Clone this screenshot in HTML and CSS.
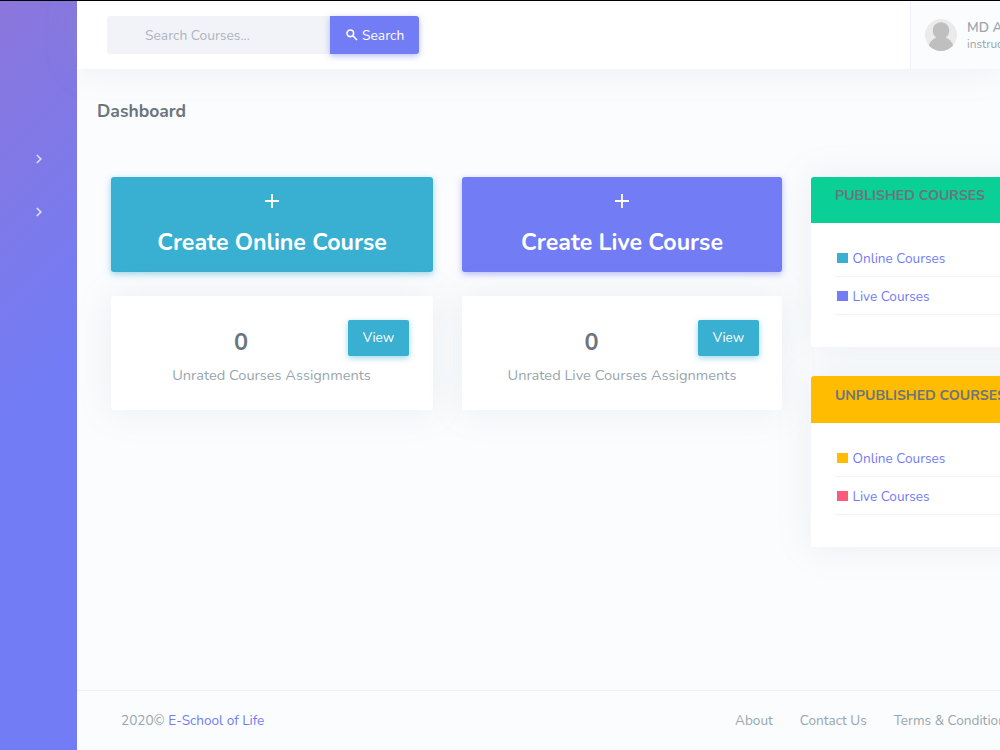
FILE: index.html
```html
<!DOCTYPE html>
<html lang="en">
<head>
  <meta charset="UTF-8">
  <title>Dashboard</title>
  <link rel="stylesheet" href="styles.css">
</head>
<body>
  <div class="wrapper">

    <div class="side-menu">
      <a class="menu-item"><svg width="8" height="10" viewBox="0 0 8 10"><path d="M1.8 1 5.8 5 1.8 9"/></svg></a>
      <a class="menu-item"><svg width="8" height="10" viewBox="0 0 8 10"><path d="M1.8 1 5.8 5 1.8 9"/></svg></a>
    </div>

    <div class="content-page">
      <div class="topbar">
        <form class="search">
          <input type="text" placeholder="Search Courses...">
          <button type="button">
            <svg width="12" height="12" viewBox="0 0 12 12"><circle cx="4.3" cy="4.3" r="3.3"/><path d="M6.8 6.8 11 11"/></svg>
            <span>Search</span>
          </button>
        </form>
        <div class="user">
          <svg class="avatar" width="32" height="32" viewBox="0 0 32 32">
            <defs><clipPath id="round"><circle cx="16" cy="16" r="16"/></clipPath></defs>
            <g clip-path="url(#round)">
              <rect width="32" height="32" fill="#ebebeb"/>
              <path fill="#bfbfbf" d="M16 3.200c-5 0-8.200 3.600-8.200 8.300 0 3 1.300 5.700 3.500 7.200C7.500 20 4.500 23 3.300 28v5h25.400v-5c-1.200-5-4.200-8-8-9.300 2.200-1.500 3.500-4.200 3.500-7.200 0-4.700-3.200-8.300-8.200-8.300z"/>
            </g>
          </svg>
          <div>
            <div class="user-name">MD A</div>
            <div class="user-role">instructor</div>
          </div>
        </div>
      </div>

      <h4 class="page-title">Dashboard</h4>

      <div class="row">
        <div class="col">
          <a class="create info">
            <svg width="16" height="16" viewBox="0 0 16 16"><path d="M8 1v14M1 8h14"/></svg>
            <span>Create Online Course</span>
          </a>
          <div class="card stat">
            <a class="view">View</a>
            <h3>0</h3>
            <p>Unrated Courses Assignments</p>
          </div>
        </div>

        <div class="col">
          <a class="create primary">
            <svg width="16" height="16" viewBox="0 0 16 16"><path d="M8 1v14M1 8h14"/></svg>
            <span>Create Live Course</span>
          </a>
          <div class="card stat live">
            <a class="view">View</a>
            <h3>0</h3>
            <p>Unrated Live Courses Assignments</p>
          </div>
        </div>

        <div class="col lists">
          <div class="card list">
            <h4 class="success">Published Courses</h4>
            <ul>
              <li><i class="info"></i><a>Online Courses</a></li>
              <li><i class="primary"></i><a>Live Courses</a></li>
            </ul>
          </div>
          <div class="card list unpublished">
            <h4 class="warning">Unpublished Courses</h4>
            <ul>
              <li><i class="warning"></i><a>Online Courses</a></li>
              <li><i class="danger"></i><a>Live Courses</a></li>
            </ul>
          </div>
        </div>
      </div>

      <div class="footer">
        <div>2020© <a class="brand">E-School of Life</a></div>
        <div class="footer-links">
          <a>About</a>
          <a>Contact Us</a>
          <a>Terms &amp; Conditions</a>
        </div>
      </div>
    </div>

  </div>
</body>
</html>
```
FILE: styles.css
```css
* { box-sizing: border-box; }
body { margin: 0; font-family: Nunito, Lato, sans-serif; font-size: 13.6px; color: #6c757d; background: #fafcfe; overflow: hidden; }
h3, h4, p, ul { margin: 0; padding: 0; }

.wrapper { display: flex; width: 1000px; height: 750px; border-top: 1px solid #000; overflow: hidden; }

.side-menu { flex: 0 0 77px; padding-top: 131px; background: linear-gradient(135deg, #8b76dc 0, #727cf5 52%); }
.menu-item { display: flex; align-items: center; height: 53px; padding-left: 35px; }
.menu-item svg { fill: none; stroke: #d8def5; stroke-width: 1.7; }

.content-page { flex: 1; min-width: 0; display: flex; flex-direction: column; }

.topbar { display: flex; justify-content: space-between; flex: 0 0 68px; background: #fff; box-shadow: 0 0 35px 0 rgba(154,161,171,.15); }
.search { display: flex; padding: 15px 0 0 30px; }
.search input { width: 223px; height: 38px; padding: 0 0 0 38px; border: none; border-radius: 3px 0 0 3px; background: #f1f3f8; font: inherit; font-size: 13.8px; }
.search input::placeholder { color: #adb5bd; }
.search button { display: flex; align-items: center; gap: 4px; width: 89px; height: 38px; padding: 0 0 0 16px; border: none; border-radius: 0 3px 3px 0; background: #727cf5; color: #fff; font: inherit; font-size: 13.8px; box-shadow: 0 2px 6px 0 rgba(114,124,245,.5); }
.search svg { fill: none; stroke: #fff; stroke-width: 1.6; }
.user { display: flex; width: 90px; padding: 18px 0 0 14px; gap: 10px; border-left: 1px solid #f1f3fa; background: #fafcfe; color: #98a6ad; white-space: nowrap; overflow: hidden; }
.avatar { flex: none; }
.user-name { font-weight: 600; line-height: 18px; }
.user-role { font-size: 11.8px; line-height: 15px; }

.page-title { height: 108px; padding: 31px 0 0 20px; font-size: 17.5px; line-height: 22px; }

.row { display: grid; grid-template-columns: 322px 320px 322px; gap: 29px; padding-left: 34px; }
.col { display: flex; flex-direction: column; gap: 24px; }
.lists { gap: 29px; }

.info { background: #39afd1; }
.primary { background: #727cf5; }
.success { background: #0acf97; }
.warning { background: #ffbc00; }
.danger { background: #fa5c7c; }

.create { display: flex; flex-direction: column; align-items: center; height: 95px; padding-top: 16px; gap: 12px; border-radius: 3px; color: #fff; font-size: 23.2px; font-weight: 700; line-height: 44px; box-shadow: 0 2px 6px 0 rgba(57,175,209,.5); }
.create.primary { box-shadow: 0 2px 6px 0 rgba(114,124,245,.5); }
.create svg { stroke: #fff; stroke-width: 1.8; }

.card { background: #fff; border-radius: 3px; box-shadow: 0 0 35px 0 rgba(154,161,171,.15); }
.stat { height: 114px; padding: 24px 24px 24px 23px; text-align: center; }
.stat.live { padding-right: 23px; }
.stat h3 { font-size: 23.5px; line-height: 44px; }
.stat p { font-size: 14.6px; line-height: 22px; color: #98a6ad; white-space: nowrap; }
.view { float: right; width: 61px; height: 36px; border-radius: 2px; background: #39afd1; color: #fff; line-height: 35px; box-shadow: 0 2px 6px 0 rgba(57,175,209,.5); }

.list { height: 170px; }
.list h4 { height: 46px; padding: 9px 0 0 24px; border-radius: 3px 3px 0 0; font-size: 14.05px; line-height: 20px; text-transform: uppercase; white-space: nowrap; }
.unpublished { height: 171px; }
.unpublished h4 { height: 47px; padding-top: 10px; }
.list ul { padding: 16px 24px 0; list-style: none; }
.list li { display: flex; align-items: center; gap: 5px; height: 38px; padding: 1px 0 0 2px; border-bottom: 1px solid #f1f3fa; color: #727cf5; }
.list i { width: 10.5px; height: 10.5px; }

.footer { display: flex; justify-content: space-between; height: 60px; margin-top: auto; padding: 20px 0 0 44px; border-top: 1px solid #eef0f3; color: #98a6ad; line-height: 20px; }
.brand { color: #727cf5; }
.footer-links { display: flex; gap: 27px; width: 265px; white-space: nowrap; }
```
